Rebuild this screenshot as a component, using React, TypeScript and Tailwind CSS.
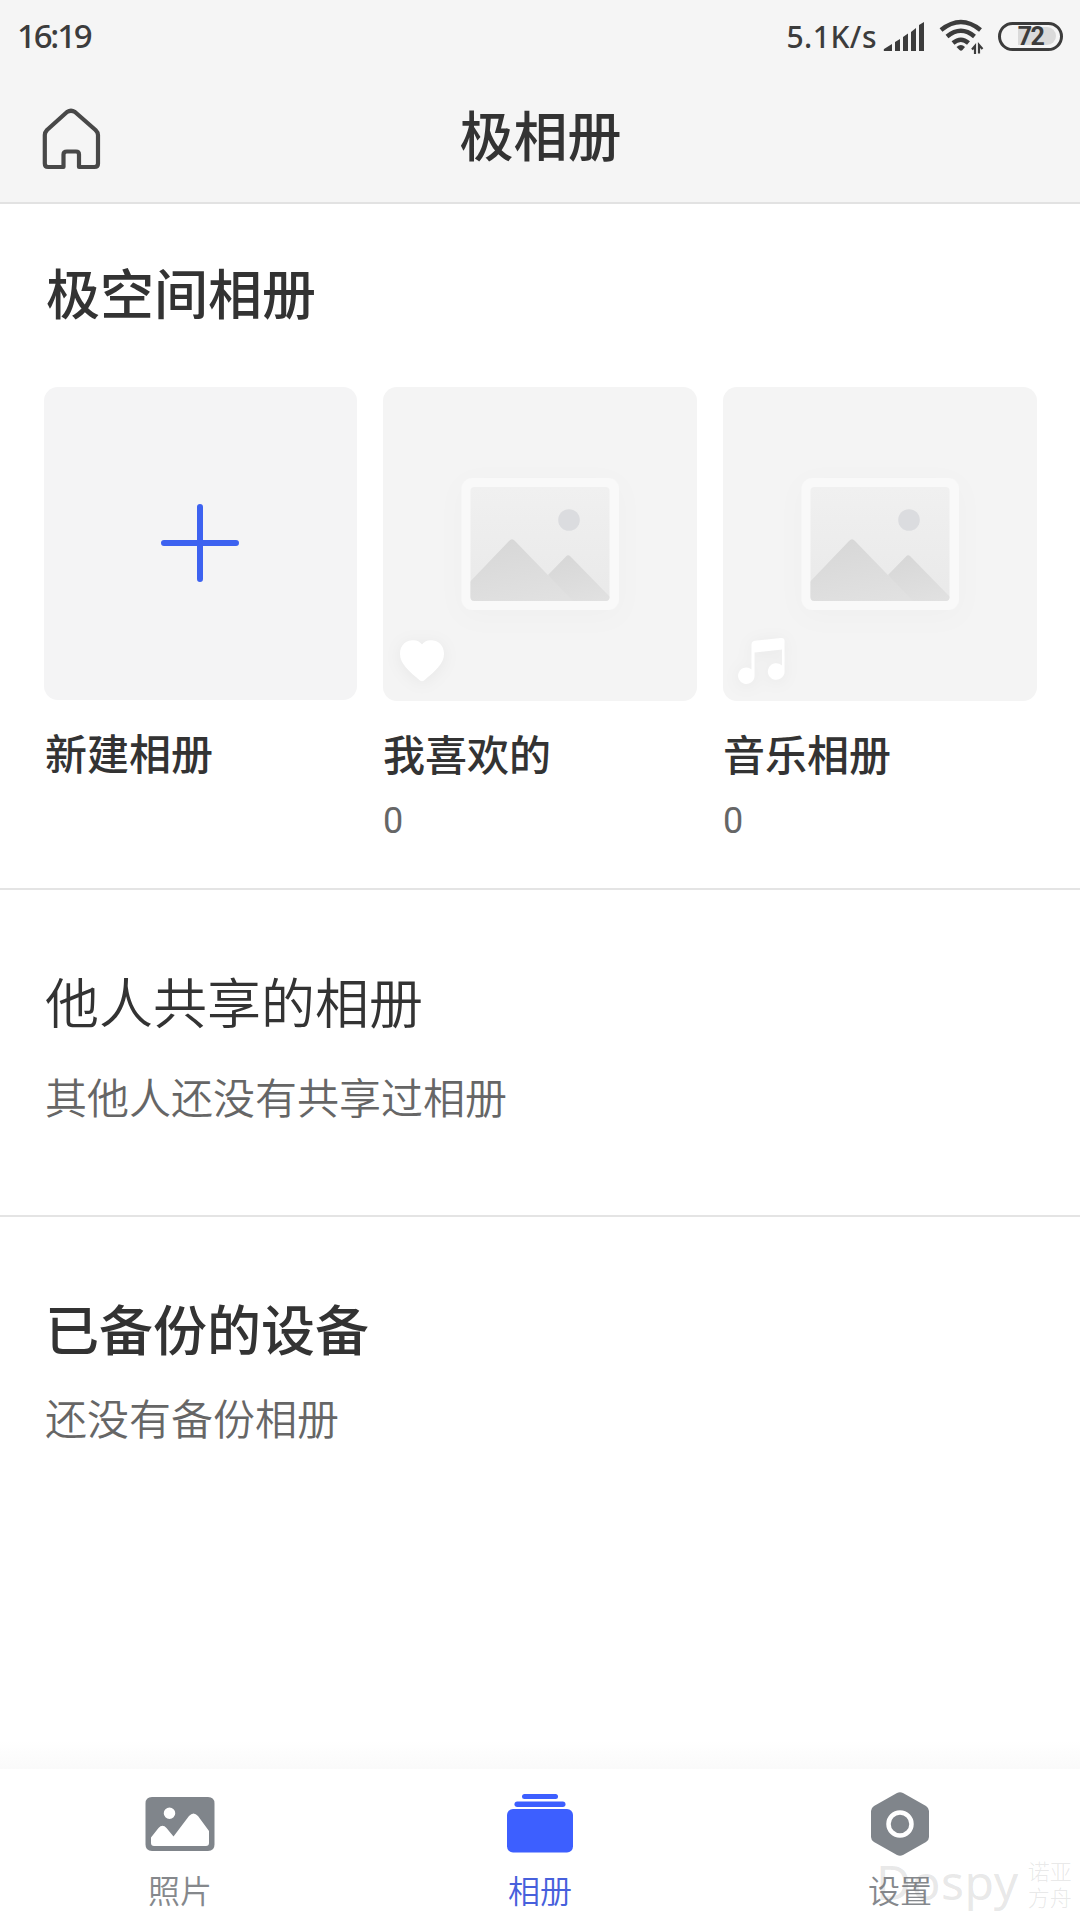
import React from "react";

const cjk = "font-['Noto_Sans_CJK_SC',sans-serif]";

function StatusBar() {
  return (
    <div className="flex h-[72px] items-center justify-between pl-[17px] pr-[17px] text-[#3c3c3c]">
      <span className="font-['Noto_Sans',sans-serif] text-[33px] leading-[72px] font-medium tracking-[-2.200px]">16:19</span>
      <div className="flex items-center">
        <span className="font-['Noto_Sans',sans-serif] text-[30px] leading-[73px] font-medium tracking-[0.500px]">5.1K/s</span>
        <svg className="ml-[6px]" width="42" height="32" viewBox="0 0 42 32" fill="currentColor">
          <path d="M1 29L9 24V31H2Q0 31 1 29ZM12 22L17 19V31H12ZM20 17L25 13.5V31H20ZM28 12L33 8V31H28ZM36 5L41 2V31H36Z" />
        </svg>
        <svg className="ml-[14px]" width="46" height="36" viewBox="0 0 46 36" fill="none" stroke="currentColor" strokeWidth="4.500">
          <path d="M2 12Q22 -4 41.500 12M8 18.500Q22 7 35.500 18.500M14 25Q22 18.500 29.500 25" />
          <path d="M17.500 29Q22 25 26 29L23.500 32Q22 33.500 20.500 32Z" fill="currentColor" stroke="none" />
          <path d="M33 31.500L36 28V36M40 35.500V27L43.500 31" strokeWidth="2.200" />
        </svg>
        <div className="relative ml-[13px] flex h-[29px] w-[65px] items-center justify-center rounded-full border-[3px] border-[#3c3c3c]">
          <div className="absolute right-1 h-[18px] w-[38px] rounded-r-full bg-[#dadada]" />
          <span className="relative font-['Roboto',sans-serif] text-[25px] leading-[25px] font-bold tracking-[-1.500px]">72</span>
        </div>
      </div>
    </div>
  );
}

function Header() {
  return (
    <header className="h-[204px] border-b-2 border-[#e2e2e2] bg-[#f5f5f5]">
      <StatusBar />
      <div className="grid h-[130px] grid-cols-3 items-center">
        <svg className="ml-[40px]" width="64" height="72" viewBox="40 101 64 72" fill="none" stroke="#484848" strokeWidth="4.200" strokeLinejoin="round">
          <path d="M67 112Q71 109.500 75 112L95.500 130Q98 132.500 98 135V163.500Q98 167 94.500 167H79V154.500Q79 151.500 76 151.500H67Q63.500 151.500 63.500 154.500V167H48Q44.800 167 44.800 163.500V135Q44.800 132.500 47 130Z" />
        </svg>
        <h1 className="mb-[6px] pl-px text-center text-[54px] leading-[80px] font-medium">极相册</h1>
      </div>
    </header>
  );
}

function Placeholder({ id }: { id: string }) {
  return (
    <svg className="h-[314px] w-[314px]" viewBox="0 0 314 314">
      <defs>
        <linearGradient id={id + "bg"} x1="0" y1="0" x2="0" y2="1">
          <stop stopColor="#f0f0f0" />
          <stop offset="1" stopColor="#e9e9e9" />
        </linearGradient>
        <linearGradient id={id + "hill"} x1="0.300" y1="0" x2="0.700" y2="1">
          <stop stopColor="#d7d7d7" />
          <stop offset="1" stopColor="#e1e1e1" />
        </linearGradient>
        <filter id={id + "glow"} x="-50%" y="-50%" width="200%" height="200%">
          <feDropShadow dx="0" dy="6" stdDeviation="14" floodColor="#000" floodOpacity="0.018" />
        </filter>
        <clipPath id={id + "clip"}>
          <rect x="87.500" y="100" width="139" height="114" rx="4" />
        </clipPath>
      </defs>
      <rect x="78.500" y="91" width="157.500" height="132" rx="11" fill="#f9f9f9" filter={"url(#" + id + "glow)"} />
      <g clipPath={"url(#" + id + "clip)"}>
        <rect x="87" y="100" width="140" height="115" fill={"url(#" + id + "bg)"} />
        <path d="M165 188L183 169.500Q185 167 187.500 169.500L232 215H185Z" fill={"url(#" + id + "hill)"} />
        <path d="M80 202L126 154Q129 150.500 132 154L192 216H80Z" fill={"url(#" + id + "hill)"} />
        <circle cx="186" cy="133" r="10.800" fill="#dbdcdf" />
      </g>
    </svg>
  );
}

const Heart = () => (
  <path d="M39 257.500C44 250 61 252 61 267C61 277 51 285 41 293.500Q39 295 37 293.500C27 285 17 277 17 267C17 252 34 250 39 257.500Z" />
);

const Music = () => (
  <path fillRule="evenodd" d="M28.500 258Q28.500 254 32 253.700L58 251Q61.500 250.700 61.500 254V285A8.300 8.300 0 1 1 59 278.500V262.500L31.500 265.500V289A8.200 8.200 0 1 1 28.500 282.500Z" />
);

function Album({ name, id, children }: { name: string; id: string; children: React.ReactNode }) {
  return (
    <div className="w-[314px]">
      <div className="relative h-[314px] rounded-[14px] bg-[#f4f4f4]">
        <Placeholder id={id} />
        <svg className="absolute inset-0 drop-shadow-[0_2px_8px_rgba(0,0,0,0.05)]" width="314" height="314" fill="#fff">
          {children}
        </svg>
      </div>
      <h3 className="mt-[21px] text-[42px] leading-[62px] font-medium">{name}</h3>
      <p className="mt-[12px] font-['Roboto',sans-serif] text-[36px] leading-[50px] text-[#666]">0</p>
    </div>
  );
}

function Tab({ label, color, text, children }: { label: string; color: string; text: string; children: React.ReactNode }) {
  return (
    <button className={"flex flex-1 flex-col items-center pt-[22px] font-[350] " + color}>
      <svg width="72" height="68" viewBox="0 0 72 68" fill="currentColor">
        {children}
      </svg>
      <span className={"mt-[7px] text-[32px] leading-[46px] " + text}>{label}</span>
    </button>
  );
}

export default function App() {
  return (
    <div className={"relative flex h-[1920px] w-[1080px] flex-col overflow-hidden bg-white text-[#333] " + cjk}>
      <Header />
      <main className="flex-1">
        <section className="h-[686px] border-b-2 border-[#e4e4e4] pt-[48px]">
          <h2 className="pl-[46px] text-[54px] leading-[80px] font-medium">极空间相册</h2>
          <div className="mt-[55px] flex gap-[26px] pl-[44px]">
            <div className="w-[313px]">
              <div className="flex h-[313px] items-center justify-center rounded-[14px] bg-[#f4f4f5] pr-[2px] pb-[2px]">
                <svg width="80" height="80" viewBox="0 0 80 80" stroke="#3d62f0" strokeWidth="6" strokeLinecap="round">
                  <path d="M4 40H76M40 4V76" />
                </svg>
              </div>
              <h3 className="mt-[21px] pl-px text-[42px] leading-[62px] font-medium">新建相册</h3>
            </div>
            <Album name="我喜欢的" id="fav"><Heart /></Album>
            <Album name="音乐相册" id="music"><Music /></Album>
          </div>
        </section>
        <section className="h-[327px] border-b-2 border-[#e4e4e4] pt-[71px] pl-[45px]">
          <h2 className="text-[54px] leading-[80px] font-[350]">他人共享的相册</h2>
          <p className="mt-[24px] text-[42px] leading-[62px] font-[350] text-[#666]">其他人还没有共享过相册</p>
        </section>
        <section className="pt-[71px] pl-[45px]">
          <h2 className="text-[54px] leading-[80px] font-medium">已备份的设备</h2>
          <p className="mt-[18px] text-[42px] leading-[62px] font-[350] text-[#666]">还没有备份相册</p>
        </section>
      </main>
      <div className="h-[28px] bg-linear-to-b from-white to-[#fafafa]" />
      <nav className="flex h-[151px] bg-white">
        <Tab label="照片" color="text-[#80858b]" text="text-[#85888c]">
          <path fillRule="evenodd" d="M8 6H64Q70.500 6 70.500 12.500V53.500Q70.500 60 64 60H8Q1.500 60 1.500 53.500V12.500Q1.500 6 8 6ZM25.500 16.500A5.700 5.700 0 1 0 25.500 28A5.700 5.700 0 1 0 25.500 16.500ZM7 46.500V52Q7 55 10 55H62Q65 55 65 52V40L54 25Q49.500 20 45 25L29.500 45.500L22.500 37Q18.500 32.500 14.500 37Z" />
        </Tab>
        <Tab label="相册" color="text-[#3d5fff]" text="text-[#4760dc]">
          <rect x="18" y="3" width="36" height="5" rx="2.500" />
          <rect x="10.500" y="10.500" width="51" height="5.500" rx="2.700" />
          <rect x="3" y="18" width="66" height="43.500" rx="6" />
        </Tab>
        <Tab label="设置" color="text-[#80858b]" text="text-[#85888c]">
          <path d="M33 2Q36 .3 39 2L62 15Q65 17 65 20V46Q65 49 62 51L39 64Q36 65.500 33 64L10 51Q7 49 7 46V20Q7 17 10 15Z" />
          <circle cx="36" cy="33" r="11.500" fill="none" stroke="#fff" strokeWidth="4.500" />
        </Tab>
      </nav>
      <div className="absolute top-[1852px] left-[876px] flex items-center text-[#777]/18">
        <span className="font-['Noto_Sans',sans-serif] text-[48px] leading-[60px] tracking-[0.500px]">Dospy</span>
        <span className="mt-[2px] ml-[9px] text-[22px] leading-[26px] font-light">诺亚<br />方舟</span>
      </div>
    </div>
  );
}
